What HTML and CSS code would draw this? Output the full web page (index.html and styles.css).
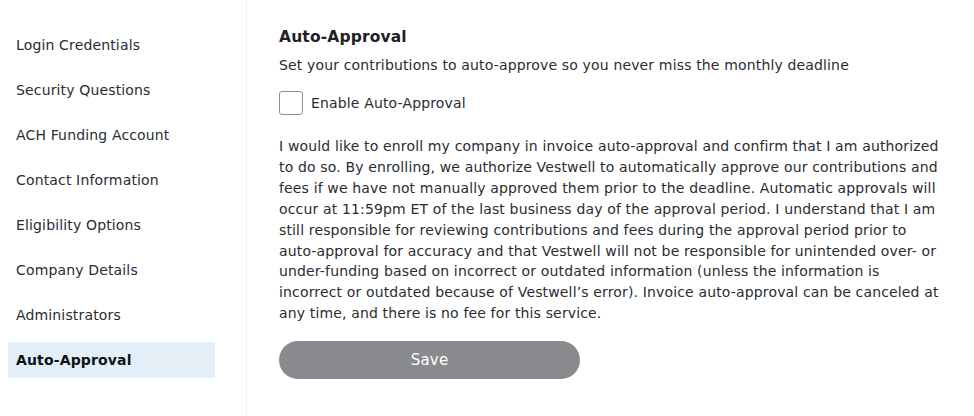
FILE: index.html
```html
<!DOCTYPE html>
<html lang="en">
<head>
    <meta charset="UTF-8">
    <title>Settings - Auto-Approval</title>
    <meta name="viewport" content="width=device-width, initial-scale=1.0">
    <link rel="stylesheet" href="styles.css">
</head>
<body>

<div class="page">
    <nav class="sidebar">
        <a class="nav-item" href="#">Login Credentials</a>
        <a class="nav-item" href="#">Security Questions</a>
        <a class="nav-item" href="#">ACH Funding Account</a>
        <a class="nav-item" href="#">Contact Information</a>
        <a class="nav-item" href="#">Eligibility Options</a>
        <a class="nav-item" href="#">Company Details</a>
        <a class="nav-item" href="#">Administrators</a>
        <a class="nav-item active" href="#">Auto-Approval</a>
    </nav>

    <main class="content">
        <h2 class="title">Auto-Approval</h2>
        <p class="subtitle">Set your contributions to auto-approve so you never miss the monthly deadline</p>

        <label class="check">
            <input type="checkbox">
            <span class="box"></span>
            <span>Enable Auto-Approval</span>
        </label>

        <p class="terms">I would like to enroll my company in invoice auto-approval and confirm that I am authorized to do so. By enrolling, we authorize Vestwell to automatically approve our contributions and fees if we have not manually approved them prior to the deadline. Automatic approvals will occur at 11:59pm ET of the last business day of the approval period. I understand that I am still responsible for reviewing contributions and fees during the approval period prior to auto-approval for accuracy and that Vestwell will not be responsible for unintended over- or under-funding based on incorrect or outdated information (unless the information is incorrect or outdated because of Vestwell’s error). Invoice auto-approval can be canceled at any time, and there is no fee for this service.</p>

        <button class="save" disabled>Save</button>
    </main>
</div>

</body>
</html>
```

FILE: styles.css
```css
body { margin: 0; background: #fff; color: #2a2c30; font-family: "DejaVu Sans", sans-serif; font-size: 14px; letter-spacing: 0.15px; }
.page { display: flex; min-height: 416px; }

.sidebar { width: 247px; border-right: 1px solid #eeeff1; padding: 27px 31px 0 8px; box-sizing: border-box; display: flex; flex-direction: column; gap: 9px; }
.nav-item { display: block; height: 36px; line-height: 36px; padding-left: 8px; color: #2a2c30; text-decoration: none; }
.nav-item.active { background: #e4eef7; font-weight: bold; color: #111; }

.content { padding: 26px 0 0 32px; width: 665px; }
.title { margin: 0; font-size: 15.5px; font-weight: bold; line-height: 22px; color: #1f2125; }
.subtitle { margin: 6px 0 0; line-height: 22px; }

.check { display: flex; align-items: center; gap: 8px; margin-top: 15px; cursor: pointer; }
.check input { display: none; }
.box { width: 22px; height: 22px; border: 1px solid #8d8f93; border-radius: 3px; }

.terms { margin: 21px 0 0; line-height: 20.9px; }

.save { margin-top: 17px; width: 301px; height: 38px; border: none; border-radius: 19px; background: #898a8d; color: #fff; font-family: inherit; font-size: 15px; letter-spacing: 0.2px; }
```
